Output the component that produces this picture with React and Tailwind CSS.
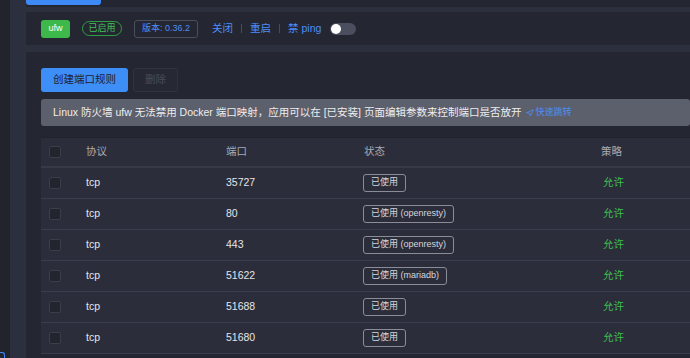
import { Navigation } from "lucide-react";

const rows = [
  { proto: "tcp", port: "35727", status: "已使用" },
  { proto: "tcp", port: "80", status: "已使用 (openresty)" },
  { proto: "tcp", port: "443", status: "已使用 (openresty)" },
  { proto: "tcp", port: "51622", status: "已使用 (mariadb)" },
  { proto: "tcp", port: "51688", status: "已使用" },
  { proto: "tcp", port: "51680", status: "已使用" },
];

const font = { fontFamily: '"Liberation Sans", "Noto Sans CJK SC", sans-serif' };

function Check() {
  return <div className="w-[12px] h-[12px] rounded-[2px] border border-[#3a3d4a] bg-[#22242e]" />;
}

export default function App() {
  return (
    <div className="w-[690px] h-[358px] overflow-hidden flex bg-[#2c2f3d] text-[10.5px]" style={font}>
      <div className="w-[10px] shrink-0 bg-[#22242d] flex flex-col justify-end">
        <div className="w-[5px] h-[6px] border-t border-r border-[#3d8af7] rounded-tr-[3px]" />
      </div>

      <div className="flex-1 pl-[16px] flex flex-col min-w-0">
        <div className="h-[7px] bg-[#242631] shrink-0">
          <div className="w-[75px] h-[5px] bg-[#3d8af7] rounded-b-[3px]" />
        </div>

        <div className="mt-[5px] h-[33px] shrink-0 bg-[#242631] pl-[15px] flex items-center">
          <span className="h-[18px] px-[7.5px] flex items-center rounded-[3px] bg-[#3db94b] text-white text-[9px]">ufw</span>
          <span className="ml-[12px] h-[15px] px-[5.5px] flex items-center rounded-full border border-[#2f9e44] text-[#44c15a] text-[9px]">已启用</span>
          <span className="ml-[12px] h-[18px] px-[7px] flex items-center rounded-[3px] border border-[#4a4f5e] text-[#4d8ef7] text-[9px]">版本: 0.36.2</span>
          <span className="ml-[14px] text-[#4d8ef7]">关闭</span>
          <span className="mx-[8px] w-px h-[9px] bg-[#474a57]" />
          <span className="text-[#4d8ef7]">重启</span>
          <span className="mx-[8px] w-px h-[9px] bg-[#474a57]" />
          <span className="text-[#4d8ef7]">禁 ping</span>
          <div className="ml-[9px] w-[26px] h-[12px] rounded-full bg-[#4b4e5e] flex items-center pl-[1px]">
            <div className="w-[10px] h-[10px] rounded-full bg-white" />
          </div>
        </div>

        <div className="mt-[7px] flex-1 bg-[#242631] pl-[15px] pt-[16px] flex flex-col">
          <div className="flex gap-[5px]">
            <button className="h-[24px] px-[12px] rounded-[3px] bg-[#3e8ef7] text-[#1d2030]">创建端口规则</button>
            <button className="h-[24px] w-[45px] rounded-[3px] bg-[#262833] border border-[#30333f] text-[#4a4d5a]">删除</button>
          </div>

          <div className="mt-[7px] h-[27px] rounded-[3px] bg-[#5c5f6c] pl-[12px] flex items-center text-[#eeeeee] whitespace-nowrap">
            <span>Linux 防火墙 ufw 无法禁用 Docker 端口映射，应用可以在 [已安装] 页面编辑参数来控制端口是否放开</span>
            <span className="ml-[5px] flex items-center text-[9px] text-[#4d8ef7]">
              <Navigation size={8} className="mr-[1px]" strokeWidth={2.5} />
              快速跳转
            </span>
          </div>

          <div className="mt-[11px] bg-[#2b2d3a] border-t border-[#22242d]">
            <div className="h-[30px] grid grid-cols-[45px_140px_138px_237px_1fr] items-center border-b-2 border-[#363946] text-[#a7aab3]">
              <div className="pl-[8px]"><Check /></div>
              <div>协议</div>
              <div>端口</div>
              <div>状态</div>
              <div>策略</div>
            </div>
            {rows.map((r, i) => (
              <div key={i} className="h-[31px] grid grid-cols-[45px_140px_138px_237px_1fr] items-center border-b border-[#3a3d4b] text-[#e3e5ea]">
                <div className="pl-[8px]"><Check /></div>
                <div>{r.proto}</div>
                <div>{r.port}</div>
                <div className="-ml-[1px]">
                  <span className="inline-flex h-[18px] px-[7px] items-center rounded-[3px] border border-[#8a8d98] text-[9px] text-[#d5d7dd]">{r.status}</span>
                </div>
                <div className="ml-[2px] text-[#3fc24f]">允许</div>
              </div>
            ))}
          </div>
        </div>
      </div>
    </div>
  );
}
